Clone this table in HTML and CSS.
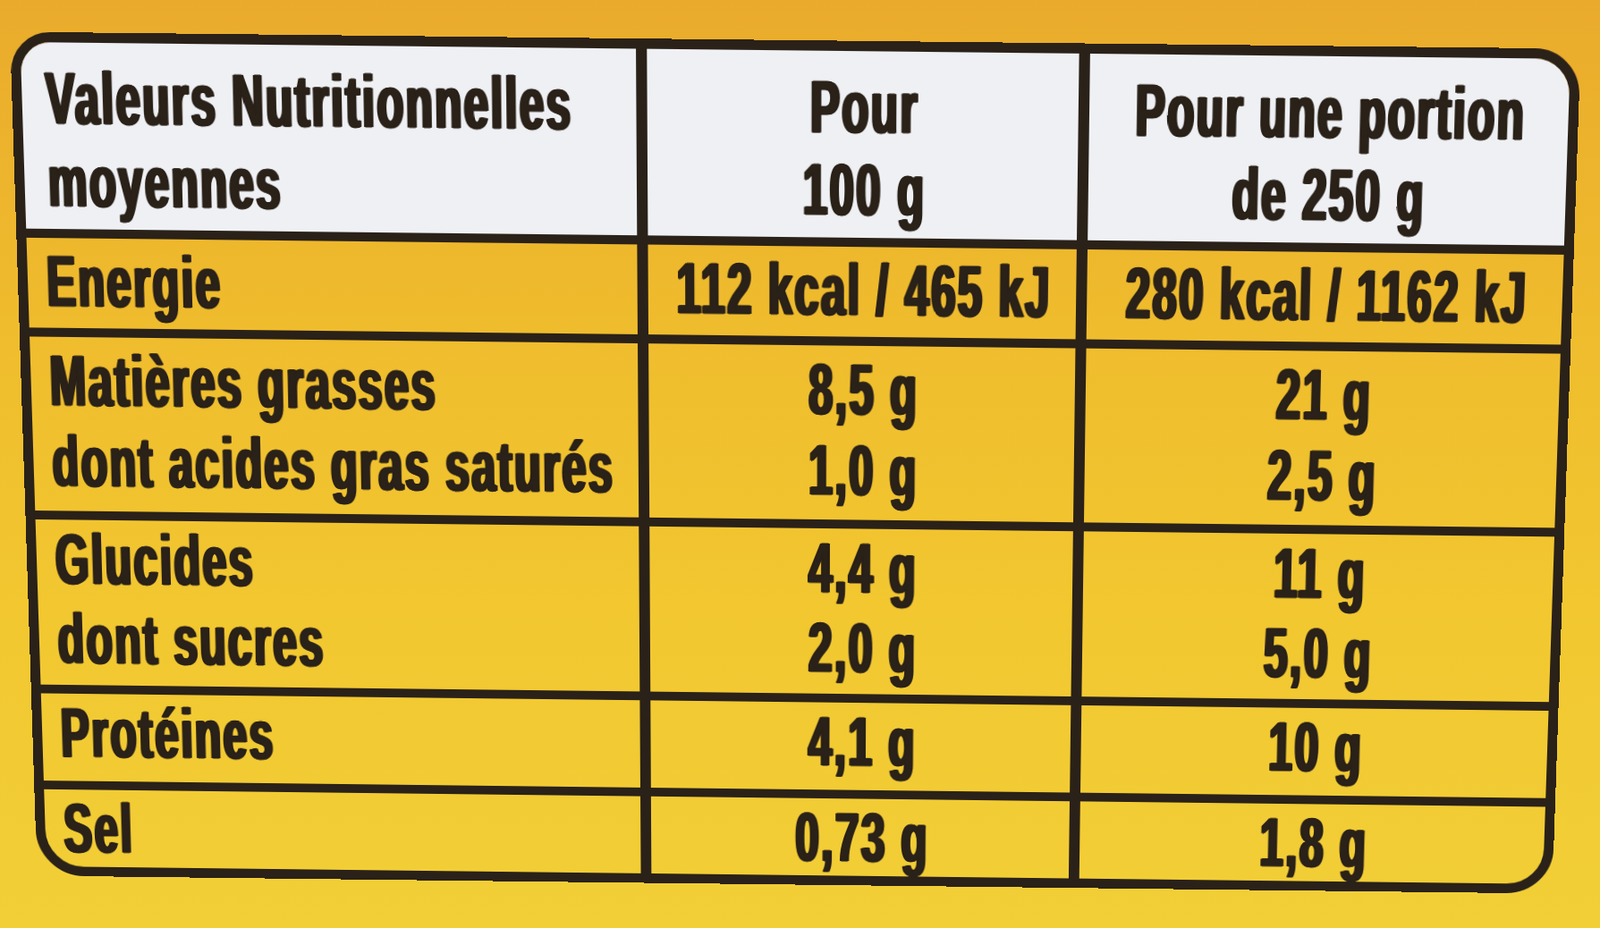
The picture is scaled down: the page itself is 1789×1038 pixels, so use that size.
FILE: index.html
```html
<!DOCTYPE html>
<html lang="fr">
<head>
<meta charset="utf-8">
<title>Valeurs Nutritionnelles moyennes</title>
<link rel="stylesheet" href="styles.css">
</head>
<body>
<div class="label">
  <div class="row head">
    <div class="c name"><span class="t">Valeurs Nutritionnelles<br>moyennes</span></div>
    <div class="c val"><span class="t">Pour<br>100 g</span></div>
    <div class="c val"><span class="t">Pour une portion<br>de 250 g</span></div>
  </div>
  <div class="row energy">
    <div class="c name"><span class="t">Energie</span></div>
    <div class="c val"><span class="t">112 kcal / 465 kJ</span></div>
    <div class="c val"><span class="t">280 kcal / 1162 kJ</span></div>
  </div>
  <div class="row fat">
    <div class="c name"><span class="t">Matières grasses<br>dont acides gras saturés</span></div>
    <div class="c val"><span class="t">8,5 g<br>1,0 g</span></div>
    <div class="c val"><span class="t">21 g<br>2,5 g</span></div>
  </div>
  <div class="row carb">
    <div class="c name"><span class="t">Glucides<br>dont sucres</span></div>
    <div class="c val"><span class="t">4,4 g<br>2,0 g</span></div>
    <div class="c val"><span class="t">11 g<br>5,0 g</span></div>
  </div>
  <div class="row prot">
    <div class="c name"><span class="t">Protéines</span></div>
    <div class="c val"><span class="t">4,1 g</span></div>
    <div class="c val"><span class="t">10 g</span></div>
  </div>
  <div class="row salt">
    <div class="c name"><span class="t">Sel</span></div>
    <div class="c val"><span class="t">0,73 g</span></div>
    <div class="c val"><span class="t">1,8 g</span></div>
  </div>
</div>
</body>
</html>
```

FILE: styles.css
```css
html, body {
  margin: 0;
  padding: 0;
  width: 100%;
  height: 100%;
  overflow: hidden;
}

body {
  background: linear-gradient(180deg, #eaab2c 0%, #efbc2d 35%, #f2c730 65%, #f2cf37 100%);
  font-family: "Liberation Sans", Arial, sans-serif;
  font-weight: 700;
  color: #2a2118;
}

.label {
  width: 1722px;
  height: 944px;
  box-sizing: border-box;
  border: 11px solid #2a2118;
  border-radius: 44px 50px 52px 54px;
  overflow: hidden;
  display: grid;
  grid-template-columns: 688px 486px 1fr;
  grid-template-rows: 213px 109px 204px 197px 110px 1fr;
  transform-origin: 0 0;
  transform: matrix3d(1.018148, 0.010975, 0, -0.00000106754,
                      0.033930, 1.038246, 0, 0.0000390466,
                      0, 0, 1, 0,
                      11, 35.5, 0, 1);
  font-size: 80px;
  line-height: 90px;
}

.row {
  display: contents;
}

.c {
  box-sizing: border-box;
  border-right: 12px solid #2a2118;
  border-bottom: 10px solid #2a2118;
  white-space: nowrap;
  min-width: 0;
}

.row .c:nth-child(3) {
  border-right: 0;
}

.row.salt .c {
  border-bottom: 0;
}

.name {
  padding-left: 21px;
}

.val {
  display: flex;
  justify-content: center;
  align-items: flex-start;
}

.t {
  display: inline-block;
  letter-spacing: 4px;
  transform: scaleX(0.605);
  transform-origin: 0 0;
  text-shadow: 1.5px 0 0, -1.5px 0 0, 3px 0 0, -3px 0 0;
  -webkit-text-stroke: 1px #2a2118;
}

.val .t {
  transform-origin: 50% 0;
  text-align: center;
  margin-right: -4px;
}

.head .c {
  background: #eef0f4;
  padding-top: 16px;
}

.head .name {
  padding-left: 26px;
}

.energy .c {
  padding-top: 3px;
}

.fat .c {
  padding-top: 4px;
}
```
